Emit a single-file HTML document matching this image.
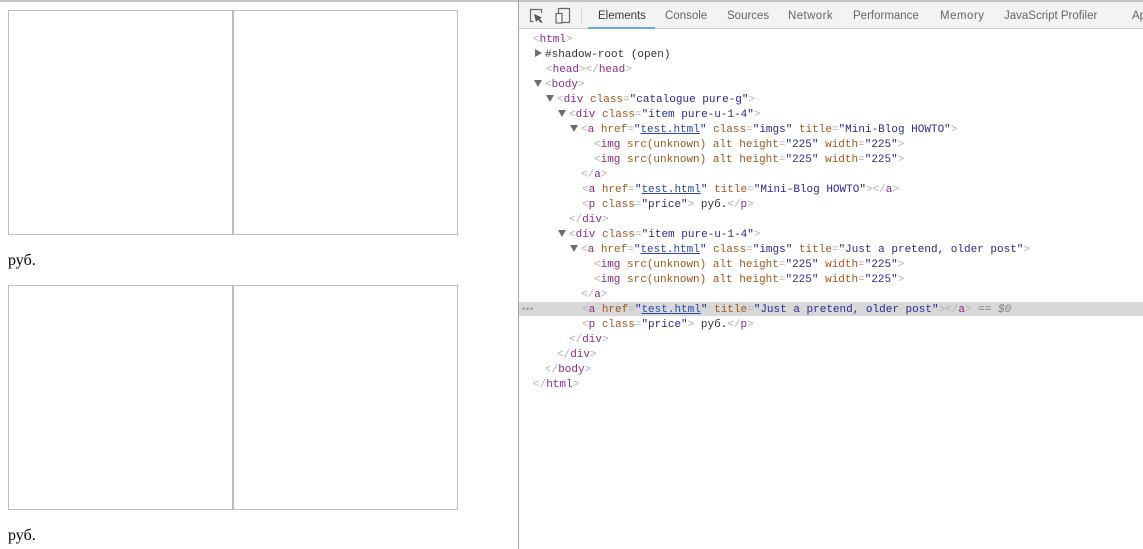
<!DOCTYPE html>
<html>
<head>
<meta charset="utf-8">
<style>
html,body{margin:0;padding:0;background:#fff;width:1143px;height:549px;overflow:hidden}
body{position:relative;font-family:"Liberation Serif",serif}
.abs{position:absolute}
.box{position:absolute;width:223px;height:223px;border:1px solid #bdbdbd;box-sizing:content-box}
.price{position:absolute;left:8px;font:16px/18px "Liberation Serif",serif;color:#000}
.tab{position:absolute;top:8px;font:11.5px/16px "Liberation Sans",sans-serif;color:#666;white-space:nowrap}
.l{position:absolute;font:11px/15px "Liberation Mono",monospace;white-space:pre;color:#b0b0b0;height:15px}
.t{color:#8f2a88}.n{color:#a0571f}.v{color:#2a2a90}.u{color:#2a4aa6;text-decoration:underline}.k{color:#333}
.tri{position:absolute;width:0;height:0}
.down{border-left:4px solid transparent;border-right:4px solid transparent;border-top:7px solid #6e6e6e}
.right{border-top:4px solid transparent;border-bottom:4px solid transparent;border-left:7px solid #6e6e6e}
</style>
</head>
<body>
<div class="abs" style="left:0;top:0;width:1143px;height:2px;background:#c4c4c4"></div>

<div class="box" style="left:8px;top:10px"></div>
<div class="box" style="left:233px;top:10px"></div>
<div class="price" style="top:252px">руб.</div>
<div class="box" style="left:8px;top:285px"></div>
<div class="box" style="left:233px;top:285px"></div>
<div class="price" style="top:527px">руб.</div>

<div class="abs" style="left:518px;top:0;width:1px;height:549px;background:#a3a3a3"></div>

<div class="abs" style="left:519px;top:2px;width:624px;height:26px;background:#f3f3f3"></div>
<div class="abs" style="left:519px;top:28px;width:624px;height:1px;background:#cdcdcd"></div>
<div class="abs" style="left:588px;top:27px;width:67px;height:2px;background:#6fa3dc"></div>
<div class="abs" style="left:581px;top:7px;width:1px;height:16px;background:#d4d4d4"></div>

<svg class="abs" style="left:527px;top:6px" width="44" height="18" viewBox="0 0 44 18" fill="none">
  <path d="M6.5 15.5H3.5V3.5H14.5V7" stroke="#6a6a6a" stroke-width="1.2"/>
  <path d="M7 8L15 11.5L12.7 12.8L15.5 16L13.8 17L11.2 13.8L9 16Z" fill="#5a5a5a"/>
  <path d="M31.5 7V2.5H42.5V16.5H35" stroke="#6a6a6a" stroke-width="1.2"/>
  <rect x="29" y="7.5" width="6" height="9.5" stroke="#6a6a6a" stroke-width="1.2"/>
</svg>

<div class="tab" style="left:598px;color:#3a3a3a">Elements</div>
<div class="tab" style="left:665px">Console</div>
<div class="tab" style="left:727px">Sources</div>
<div class="tab" style="left:788px;letter-spacing:.4px">Network</div>
<div class="tab" style="left:853px">Performance</div>
<div class="tab" style="left:940px;letter-spacing:.5px">Memory</div>
<div class="tab" style="left:1004px">JavaScript Profiler</div>
<div class="tab" style="left:1132px">Application</div>

<div class="abs" style="left:519px;top:302px;width:624px;height:14px;background:#d8d8d8"></div>
<div class="abs" style="left:521px;top:306px;font:bold 9px/9px 'Liberation Mono',monospace;color:#999;letter-spacing:-1.5px">•••</div>

<div class="tri right" style="left:535px;top:49px"></div>
<div class="tri down" style="left:534px;top:80px"></div>
<div class="tri down" style="left:546px;top:95px"></div>
<div class="tri down" style="left:558px;top:110px"></div>
<div class="tri down" style="left:570px;top:125px"></div>
<div class="tri down" style="left:558px;top:230px"></div>
<div class="tri down" style="left:570px;top:245px"></div>

<div class="l" style="left:533px;top:33px">&lt;<span class="t">html</span>&gt;</div>
<div class="l" style="left:545px;top:48px"><span class="k">#shadow-root (open)</span></div>
<div class="l" style="left:546px;top:63px">&lt;<span class="t">head</span>&gt;&lt;/<span class="t">head</span>&gt;</div>
<div class="l" style="left:545px;top:78px">&lt;<span class="t">body</span>&gt;</div>
<div class="l" style="left:557px;top:93px">&lt;<span class="t">div</span> <span class="n">class</span>=<span class="v">"catalogue pure-g"</span>&gt;</div>
<div class="l" style="left:569px;top:108px">&lt;<span class="t">div</span> <span class="n">class</span>=<span class="v">"item pure-u-1-4"</span>&gt;</div>
<div class="l" style="left:581px;top:123px">&lt;<span class="t">a</span> <span class="n">href</span>=<span class="v">"<span class="u">test.html</span>"</span> <span class="n">class</span>=<span class="v">"imgs"</span> <span class="n">title</span>=<span class="v">"Mini-Blog HOWTO"</span>&gt;</div>
<div class="l" style="left:594px;top:138px">&lt;<span class="t">img</span> <span class="n">src(unknown) alt height</span>=<span class="v">"225"</span> <span class="n">width</span>=<span class="v">"225"</span>&gt;</div>
<div class="l" style="left:594px;top:153px">&lt;<span class="t">img</span> <span class="n">src(unknown) alt height</span>=<span class="v">"225"</span> <span class="n">width</span>=<span class="v">"225"</span>&gt;</div>
<div class="l" style="left:581px;top:168px">&lt;/<span class="t">a</span>&gt;</div>
<div class="l" style="left:582px;top:183px">&lt;<span class="t">a</span> <span class="n">href</span>=<span class="v">"<span class="u">test.html</span>"</span> <span class="n">title</span>=<span class="v">"Mini-Blog HOWTO"</span>&gt;&lt;/<span class="t">a</span>&gt;</div>
<div class="l" style="left:582px;top:198px">&lt;<span class="t">p</span> <span class="n">class</span>=<span class="v">"price"</span>&gt; <span class="k">руб.</span>&lt;/<span class="t">p</span>&gt;</div>
<div class="l" style="left:569px;top:213px">&lt;/<span class="t">div</span>&gt;</div>
<div class="l" style="left:569px;top:228px">&lt;<span class="t">div</span> <span class="n">class</span>=<span class="v">"item pure-u-1-4"</span>&gt;</div>
<div class="l" style="left:581px;top:243px">&lt;<span class="t">a</span> <span class="n">href</span>=<span class="v">"<span class="u">test.html</span>"</span> <span class="n">class</span>=<span class="v">"imgs"</span> <span class="n">title</span>=<span class="v">"Just a pretend, older post"</span>&gt;</div>
<div class="l" style="left:594px;top:258px">&lt;<span class="t">img</span> <span class="n">src(unknown) alt height</span>=<span class="v">"225"</span> <span class="n">width</span>=<span class="v">"225"</span>&gt;</div>
<div class="l" style="left:594px;top:273px">&lt;<span class="t">img</span> <span class="n">src(unknown) alt height</span>=<span class="v">"225"</span> <span class="n">width</span>=<span class="v">"225"</span>&gt;</div>
<div class="l" style="left:581px;top:288px">&lt;/<span class="t">a</span>&gt;</div>
<div class="l" style="left:582px;top:303px">&lt;<span class="t">a</span> <span class="n">href</span>=<span class="v">"<span class="u">test.html</span>"</span> <span class="n">title</span>=<span class="v">"Just a pretend, older post"</span>&gt;&lt;/<span class="t">a</span>&gt; <span style="color:#808080;font-style:italic">== $0</span></div>
<div class="l" style="left:582px;top:318px">&lt;<span class="t">p</span> <span class="n">class</span>=<span class="v">"price"</span>&gt; <span class="k">руб.</span>&lt;/<span class="t">p</span>&gt;</div>
<div class="l" style="left:569px;top:333px">&lt;/<span class="t">div</span>&gt;</div>
<div class="l" style="left:557px;top:348px">&lt;/<span class="t">div</span>&gt;</div>
<div class="l" style="left:545px;top:363px">&lt;/<span class="t">body</span>&gt;</div>
<div class="l" style="left:533px;top:378px">&lt;/<span class="t">html</span>&gt;</div>
</body>
</html>
